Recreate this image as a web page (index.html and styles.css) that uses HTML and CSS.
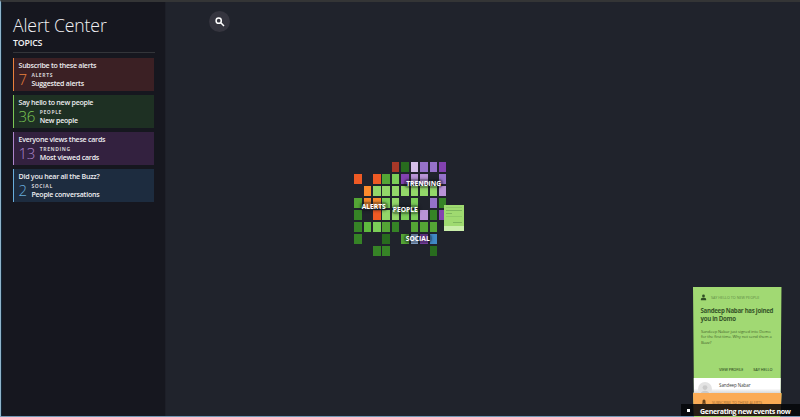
FILE: index.html
```html
<!DOCTYPE html>
<html lang="en">
<head>
<meta charset="utf-8">
<title>Alert Center</title>
<link rel="stylesheet" href="styles.css">
</head>
<body>
<div class="app">
  <aside class="sidebar">
    <h1>Alert Center</h1>
    <h2>TOPICS</h2>
    <section class="topic alerts">
      <h3>Subscribe to these alerts</h3>
      <div class="stat"><b>7</b><div><small>ALERTS</small><p>Suggested alerts</p></div></div>
    </section>
    <section class="topic people">
      <h3>Say hello to new people</h3>
      <div class="stat"><b>36</b><div><small>PEOPLE</small><p>New people</p></div></div>
    </section>
    <section class="topic trending">
      <h3>Everyone views these cards</h3>
      <div class="stat"><b>13</b><div><small>TRENDING</small><p>Most viewed cards</p></div></div>
    </section>
    <section class="topic social">
      <h3>Did you hear all the Buzz?</h3>
      <div class="stat"><b>2</b><div><small>SOCIAL</small><p>People conversations</p></div></div>
    </section>
  </aside>
  <main class="canvas">
    <button class="search" aria-label="Search">
      <svg viewBox="0 0 10 10"><circle cx="3.7" cy="3.7" r="2.6"/><path d="M5.8 5.8 9 9"/></svg>
    </button>
    <div class="mosaic">
      <i></i><i></i><i></i><i></i><i class="br"></i><i class="dg"></i><i class="pl"></i><i class="pu"></i><i class="pu"></i><i class="dp"></i>
      <i class="or"></i><i></i><i class="or"></i><i class="g"></i><i class="mg"></i><i class="dp"></i><i class="li"></i><i class="li"></i><i></i><i class="pu"></i>
      <i></i><i class="lo"></i><i class="lg"></i><i class="lg"></i><i class="lg"></i><i class="lg"></i><i class="lg"></i><i class="lg"></i><i class="lg"></i><i class="li"></i>
      <i class="g"></i><i class="lo"></i><i class="lo"></i><i class="mg"></i><i class="lg"></i><i></i><i class="mg"></i><i></i><i class="pu"></i><i class="fg"></i>
      <i class="fg"></i><i></i><i class="or"></i><i class="lg"></i><i class="lg"></i><i class="mg"></i><i class="mg"></i><i class="li"></i><i class="fg"></i><i class="dp"></i>
      <i class="fg"></i><i class="g2"></i><i class="mg"></i><i class="g"></i><i class="fg"></i><i></i><i class="g"></i><i class="g"></i><i class="g"></i><i></i>
      <i class="fg"></i><i></i><i></i><i class="dg"></i><i></i><i class="g"></i><i class="lb"></i><i class="dp"></i><i class="bl"></i><i></i>
      <i></i><i></i><i class="fg"></i><i class="fg"></i><i></i><i></i><i></i><i></i><i class="dg"></i><i></i>
      <span class="tag tag-trending">TRENDING</span>
      <span class="tag tag-alerts">ALERTS</span>
      <span class="tag tag-people">PEOPLE</span>
      <span class="tag tag-social">SOCIAL</span>
      <div class="mini"><s></s><s class="dark"></s><s class="short dark"></s><s></s><s class="gap"></s><s class="right dark"></s><u></u></div>
    </div>
    <article class="card">
      <div class="kicker">
        <svg viewBox="0 0 8 8"><circle cx="4" cy="2.3" r="1.6"/><path d="M1 7V5.8C1 4.8 2.4 4.4 4 4.4S7 4.8 7 5.8V7Z"/></svg>
        <span>SAY HELLO TO NEW PEOPLE</span>
      </div>
      <h4>Sandeep Nabar has joined<br>you in Domo</h4>
      <p>Sandeep Nabar just signed into Domo<br>for the first time. Why not send them a<br>Buzz?</p>
      <div class="actions"><span>VIEW PROFILE</span><span>SAY HELLO</span></div>
      <div class="person">
        <svg viewBox="0 0 14 14"><circle cx="7" cy="7" r="7" fill="#e3e3e3"/><circle cx="7" cy="5.6" r="2.4" fill="#cacaca"/><path d="M2.5 12.2C3 9.6 5 8.8 7 8.8s4 .8 4.5 3.4C9 14.4 5 14.4 2.5 12.2Z" fill="#cacaca"/></svg>
        <span>Sandeep Nabar</span>
      </div>
      <div class="next">
        <svg viewBox="0 0 8 8"><path d="M4 .8C2.6.8 2 2 2 3.2V5L1.2 6.2H6.8L6 5V3.2C6 2 5.4.8 4 .8ZM3.2 6.5h1.6L4 7.3Z"/></svg>
        <span>SUBSCRIBE TO THESE ALERTS</span>
      </div>
    </article>
    <div class="toast">Generating new events now</div>
  </main>
</div>
</body>
</html>
```
FILE: styles.css
```css
* { box-sizing: border-box; }
body, h1, h2, h3, h4, p { margin: 0; font-weight: 400; }
body { font-family: "Open Sans", "Noto Sans", sans-serif; color: #f2f2f4; background: #20232c; overflow: hidden; }
.app { position: relative; display: flex; width: 800px; height: 417px; border-top: 2px solid #343536; border-bottom: 1px solid #7296b4; border-left: 1px solid #8fb4ca; }
.sidebar { width: 165px; padding: 12px 12px 0 11px; background: #16171f; border-left: 1px solid #102536; border-right: 1px solid #1d1f28; white-space: nowrap; }
h1 { font-size: 17.6px; line-height: 22px; font-weight: 300; letter-spacing: -.1px; }
h2 { width: 142px; font-size: 8.8px; line-height: 11px; font-weight: 600; letter-spacing: -.2px; margin: 2px 0 4px; }
h2::after { content: ""; display: block; height: 1px; margin-top: 3px; background: #33353a; }
.topic { width: 141px; height: 33px; margin: 0 0 4px; padding: 2px 0 0 4.5px; border-left: 1px solid; }
h2 + .topic { margin-top: 5px; }
.topic h3 { color: #ededf0; font-size: 7.1px; line-height: 10px; font-weight: 600; letter-spacing: -.27px; }
.stat { display: flex; align-items: center; gap: 4.5px; }
.stat b { font-size: 15px; line-height: 19px; font-weight: 300; letter-spacing: -.2px; margin-top: 0; }
.stat small { display: block; font-size: 5px; line-height: 7px; letter-spacing: .6px; color: #d2d0d4; font-weight: 700; }
.stat p { font-size: 7px; line-height: 9px; color: #f2f2f4; font-weight: 600; letter-spacing: -.2px; }
.alerts { background: #3b2024; color: #ea803c; }
.people { background: #1e3023; color: #7cc755; }
.trending { background: #33213f; color: #ad85cc; }
.social { background: #1d2c3f; color: #68addb; }
.canvas { position: relative; flex: 1; }
.search { display: grid; place-items: center; width: 21px; height: 21px; margin: 9px 0 0 43px; padding: 0; border: 0; border-radius: 50%; background: #35353f; }
.search svg { width: 10px; height: 10px; fill: none; stroke: #fff; stroke-width: 1.5; }
.mosaic { position: relative; display: grid; grid-template-columns: repeat(10, 7.5px); grid-auto-rows: 10px; gap: 2px 1.93px; width: 94px; margin: 130.3px 0 0 188.2px; }
.br { background: #a73828; } .or { background: #ee5a24; } .lo { background: #fb8b2c; }
.dg { background: #286b1e; } .fg { background: #368326; } .g { background: #54a535; } .g2 { background: #5fba3e; }
.mg { background: #7bce58; } .lg { background: #93d769; }
.pl { background: #d5bfe9; } .pu { background: #9672ca; } .dp { background: #8342b0; } .li { background: #b893d6; }
.lb { background: #8fb0d8; } .bl { background: #4189c6; }
.tag { position: absolute; padding: 0 2px; border-radius: 5px; background: rgba(15, 17, 22, .36); box-shadow: 0 0 3px rgba(15, 17, 22, .4); color: #fff; font-size: 6.7px; line-height: 9px; font-weight: 700; }
.tag-trending { left: 50px; top: 16.5px; }
.tag-alerts { left: 5.5px; top: 39.5px; }
.tag-people { left: 36.5px; top: 42.7px; }
.tag-social { left: 49.5px; top: 71.5px; letter-spacing: .05px; }
.mini { position: absolute; left: 90px; top: 42.5px; width: 19.5px; height: 26px; padding: 2px; background: #9fda70; }
.mini s { display: block; height: 1px; margin-bottom: 2px; background: #8fca68; }
.mini .dark { background: #7db65d; }
.mini .short { width: 6px; }
.mini .gap { background: none; }
.mini .right { width: 9px; margin-left: auto; }
.mini u { position: absolute; left: 0; right: 0; bottom: 0; height: 5px; background: #c9edaa; }
.card { position: absolute; left: 527px; top: 285px; width: 88.5px; height: 130px; background: #a1d973; color: #365529; box-shadow: 0 0 3px #0d1116; white-space: nowrap; overflow: hidden; clip-path: polygon(0 0, 100% 0, 99% 81%, 100% 82%, 99% 100%, 1% 100%, 0 82%, 1% 81%); }
.kicker { display: flex; align-items: center; gap: 4px; height: 10px; margin: 5px 0 0 7px; font-size: 3.7px; letter-spacing: 0; color: #5f8c47; }
.kicker svg { width: 7px; height: 7px; fill: #304d25; }
.card h4 { margin: 4.5px 0 0 7.5px; font-size: 6.1px; line-height: 8px; font-weight: 700; letter-spacing: -.28px; }
.card p { margin: 6px 0 0 8px; font-size: 4.1px; line-height: 5.6px; letter-spacing: -.08px; color: #48692f; }
.actions { display: flex; justify-content: flex-end; gap: 10px; height: 7px; margin: 21px 9px 0 0; font-size: 3.8px; line-height: 7px; font-weight: 600; letter-spacing: -.08px; }
.person { display: flex; gap: 7px; height: 15px; margin-top: 5px; padding: 4px 0 0 5px; background: linear-gradient(#fff 70%, #d8d8d8); font-size: 4.5px; line-height: 6px; letter-spacing: -.08px; color: #3d3d3d; }
.person svg { width: 14px; height: 14px; flex: none; }
.next { position: relative; display: flex; align-items: center; gap: 5px; height: 23px; padding: 0 0 5px 8px; background: #fbab55; color: #a46a2d; font-size: 3.8px; letter-spacing: -.08px; }
.next svg { width: 6px; height: 6px; fill: #69431c; }
.toast { position: absolute; left: 515px; right: 0; bottom: 0; height: 12px; padding-left: 19px; background: rgba(5, 6, 9, .86); color: #fff; font-size: 7.1px; line-height: 15px; font-weight: 700; letter-spacing: -.33px; white-space: nowrap; }
.toast::before { content: ""; position: absolute; left: 6px; top: 5px; width: 3px; height: 3px; background: #fff; }
```
